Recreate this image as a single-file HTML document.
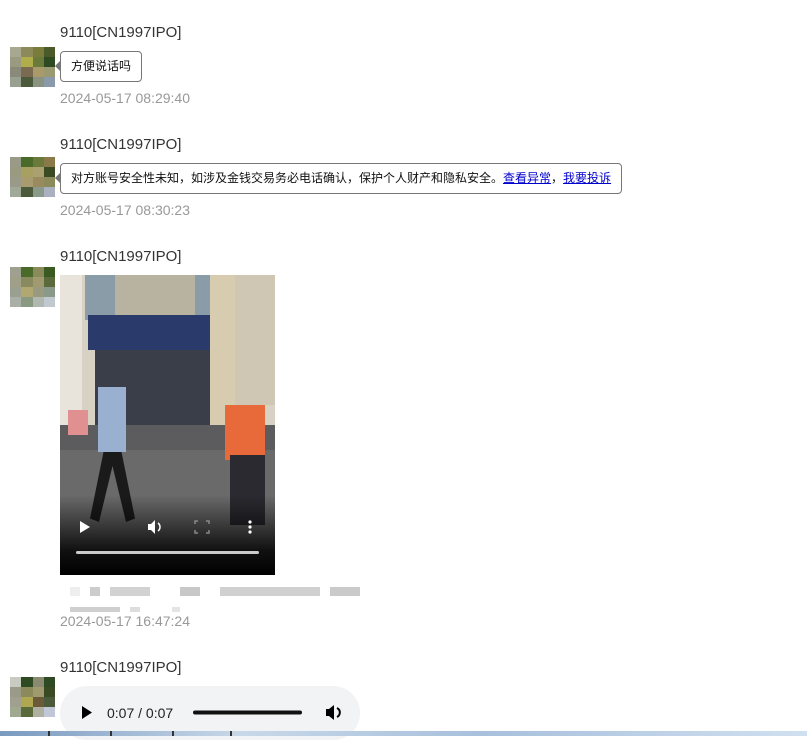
<!DOCTYPE html>
<html><head><meta charset="utf-8"><style>
*{margin:0;padding:0;box-sizing:border-box}
body{width:807px;height:736px;overflow:hidden;background:#fff;position:relative;font-family:"Liberation Sans","Noto Sans CJK SC",sans-serif}
.a{position:absolute}
.name{position:absolute;left:60px;font-size:15px;color:#333}
.ts{position:absolute;left:60px;font-size:14px;color:#999}
.av{position:absolute;left:10px;width:45px;height:40px;display:grid;grid-template-columns:repeat(4,1fr);grid-template-rows:repeat(4,1fr)}
.bub{position:absolute;left:60px;height:31px;border:1px solid #777;border-radius:4px;font-size:12px;color:#111;padding:0 10px;line-height:29px;white-space:nowrap;background:#fff}
.bub:before{content:"";position:absolute;left:-6px;top:9px;border:5px solid transparent;border-right-color:#777;border-left:0}
.bub a{color:#0000cc;text-decoration:underline}
.g{position:absolute;background:#ccc}
</style></head><body>

<div class="name" style="top:24px">9110[CN1997IPO]</div>
<div class="av" style="top:47px">
<i style="background:#a8a890"></i><i style="background:#8c8a5a"></i><i style="background:#7a7c3a"></i><i style="background:#4a5a2a"></i>
<i style="background:#9a9a80"></i><i style="background:#b0ae4a"></i><i style="background:#6a7a3a"></i><i style="background:#2e4a22"></i>
<i style="background:#8a8a7a"></i><i style="background:#7a6a52"></i><i style="background:#aa9a6a"></i><i style="background:#9a9a70"></i>
<i style="background:#9aa090"></i><i style="background:#4a5a3a"></i><i style="background:#8a9280"></i><i style="background:#8a9aaa"></i>
</div>
<div class="bub" style="top:51px;width:82px">方便说话吗</div>
<div class="ts" style="top:90px">2024-05-17 08:29:40</div>

<div class="name" style="top:136px">9110[CN1997IPO]</div>
<div class="av" style="top:157px">
<i style="background:#9a9a88"></i><i style="background:#4a6a2a"></i><i style="background:#6a7a3a"></i><i style="background:#8a7a4a"></i>
<i style="background:#9a9a80"></i><i style="background:#a8a060"></i><i style="background:#aaa070"></i><i style="background:#3a4a22"></i>
<i style="background:#9a9a88"></i><i style="background:#aa9a70"></i><i style="background:#9a8a60"></i><i style="background:#8a8a5a"></i>
<i style="background:#a0a898"></i><i style="background:#4a5a3a"></i><i style="background:#8a9a8a"></i><i style="background:#aab0c0"></i>
</div>
<div class="bub" style="top:163px;width:562px">对方账号安全性未知，如涉及金钱交易务必电话确认，保护个人财产和隐私安全。<a>查看异常</a>，<a>我要投诉</a></div>
<div class="ts" style="top:202px">2024-05-17 08:30:23</div>

<div class="name" style="top:248px">9110[CN1997IPO]</div>
<div class="av" style="top:267px">
<i style="background:#a0a090"></i><i style="background:#4a6a2a"></i><i style="background:#8a8a5a"></i><i style="background:#3a5a22"></i>
<i style="background:#a0a088"></i><i style="background:#8a8a60"></i><i style="background:#a09a70"></i><i style="background:#5a6a3a"></i>
<i style="background:#9aa090"></i><i style="background:#b0a870"></i><i style="background:#9a9a80"></i><i style="background:#8a9a8a"></i>
<i style="background:#aab0a8"></i><i style="background:#8a9a80"></i><i style="background:#b0b8b0"></i><i style="background:#c0c8d0"></i>
</div>

<!-- video -->
<div class="a" style="left:60px;top:275px;width:215px;height:300px;overflow:hidden;background:#6a6a6a">
 <div class="a" style="left:0;top:0;width:215px;height:180px;background:#d8d2c4"></div>
 <div class="a" style="left:0;top:0;width:22px;height:175px;background:#e8e4dc"></div>
 <div class="a" style="left:25px;top:0;width:125px;height:45px;background:#8a9ca8"></div>
 <div class="a" style="left:55px;top:0;width:80px;height:40px;background:#b8b2a0"></div>
 <div class="a" style="left:28px;top:40px;width:125px;height:35px;background:#2a3a6a"></div>
 <div class="a" style="left:35px;top:75px;width:115px;height:85px;background:#3a3e48"></div>
 <div class="a" style="left:150px;top:0;width:25px;height:150px;background:#d8ccb0"></div>
 <div class="a" style="left:175px;top:0;width:40px;height:130px;background:#cfc6b4"></div>
 <div class="a" style="left:0;top:150px;width:215px;height:150px;background:#5c5c5e"></div>
 <div class="a" style="left:0;top:175px;width:215px;height:125px;background:#6a6a6a"></div>
 <div class="a" style="left:38px;top:112px;width:28px;height:65px;background:#9ab0d0"></div>
 <div class="a" style="left:30px;top:177px;width:45px;height:70px;background:#1a1a1a;clip-path:polygon(30% 0,70% 0,100% 95%,80% 100%,50% 20%,20% 100%,0 95%)"></div>
 <div class="a" style="left:165px;top:130px;width:40px;height:55px;background:#e86a3a"></div>
 <div class="a" style="left:170px;top:180px;width:35px;height:70px;background:#2a2a30"></div>
 <div class="a" style="left:8px;top:135px;width:20px;height:25px;background:#e09090"></div>
 <div class="a" style="left:0;top:220px;width:215px;height:80px;background:linear-gradient(rgba(0,0,0,0),rgba(0,0,0,.85) 70%,#000)"></div>
 <svg class="a" style="left:0;top:240px" width="215" height="60">
  <path d="M20 6 L30 12 L20 18Z" fill="#fff"/>
  <path d="M88 9h3l4-4v14l-4-4h-3z" fill="#fff"/><path d="M98 8a5 5 0 0 1 0 8" stroke="#fff" stroke-width="1.5" fill="none"/>
  <path d="M138 6h-3v3M146 6h3v3M138 18h-3v-3M146 18h3v-3" stroke="#888" stroke-width="1.5" fill="none"/>
  <circle cx="190" cy="7" r="1.6" fill="#fff"/><circle cx="190" cy="12" r="1.6" fill="#fff"/><circle cx="190" cy="17" r="1.6" fill="#fff"/>
  <rect x="16" y="36" width="183" height="3" rx="1.5" fill="#ccc"/>
 </svg>
</div>

<!-- blurred text -->
<div class="g" style="left:70px;top:587px;width:10px;height:9px;background:#eee"></div>
<div class="g" style="left:90px;top:587px;width:10px;height:9px;background:#ccc"></div>
<div class="g" style="left:110px;top:587px;width:40px;height:9px;background:#d2d2d2"></div>
<div class="g" style="left:180px;top:587px;width:20px;height:9px;background:#c8c8c8"></div>
<div class="g" style="left:220px;top:587px;width:100px;height:9px;background:#d0d0d0"></div>
<div class="g" style="left:330px;top:587px;width:30px;height:9px;background:#cacaca"></div>
<div class="g" style="left:70px;top:607px;width:50px;height:5px;background:#cfcfcf"></div>
<div class="g" style="left:130px;top:607px;width:10px;height:5px;background:#ddd"></div>
<div class="g" style="left:172px;top:607px;width:8px;height:5px;background:#e4e4e4"></div>
<div class="ts" style="top:613px">2024-05-17 16:47:24</div>

<div class="name" style="top:659px">9110[CN1997IPO]</div>
<div class="av" style="top:677px">
<i style="background:#c8ccc0"></i><i style="background:#2e4a22"></i><i style="background:#8a8a70"></i><i style="background:#2e4a22"></i>
<i style="background:#9a9a88"></i><i style="background:#8a8a5a"></i><i style="background:#a09a70"></i><i style="background:#3a4a22"></i>
<i style="background:#a0a090"></i><i style="background:#b0a850"></i><i style="background:#6a5a3a"></i><i style="background:#4a5a3a"></i>
<i style="background:#a0a890"></i><i style="background:#5a6a3a"></i><i style="background:#b0b0a0"></i><i style="background:#c0c8d8"></i>
</div>
<!-- audio -->
<div class="a" style="left:60px;top:686px;width:300px;height:54px;border-radius:27px;background:#f1f3f4">
 <svg class="a" style="left:0;top:0" width="300" height="54">
  <path d="M22 20 L32 26.5 L22 33Z" fill="#000"/>
  <text x="47" y="32" font-family="Liberation Sans, sans-serif" font-size="14" fill="#222">0:07 / 0:07</text>
  <rect x="133" y="24.5" width="109" height="4" rx="2" fill="#111"/>
  <path d="M266 23h3l5-4v15l-5-4h-3z" fill="#000"/><path d="M277 22a5 5 0 0 1 0 9" stroke="#000" stroke-width="2" fill="none"/>
 </svg>
</div>

<!-- taskbar strip -->
<div class="a" style="left:0;top:731px;width:807px;height:5px;background:linear-gradient(90deg,#7a9ac0,#c8d8e8 30%,#a8c0dc 60%,#d0e0f0)"></div>
<div class="a" style="left:48px;top:731px;width:2px;height:5px;background:#333"></div>
<div class="a" style="left:110px;top:731px;width:2px;height:5px;background:#333"></div>
<div class="a" style="left:172px;top:731px;width:2px;height:5px;background:#333"></div>
<div class="a" style="left:230px;top:731px;width:2px;height:5px;background:#333"></div>
</body></html>
